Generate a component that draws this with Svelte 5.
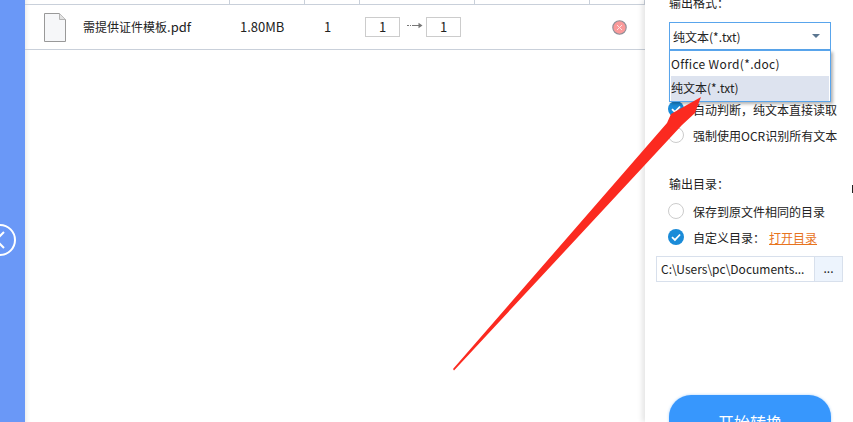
<script lang="ts">
  const columns = [205, 75, 55, 115, 115, 55];
  const outputFormats = ['Office Word(*.doc)', '纯文本(*.txt)'];
</script>

<div class="page">
  <aside class="rail">
    <button class="collapse" aria-label="收起">
      <svg width="28" height="34" viewBox="0 0 28 34">
        <circle cx="3" cy="17" r="15" fill="none" stroke="#fff" stroke-width="2" />
        <path d="M7 9 L-1 17 L7 25" fill="none" stroke="#fff" stroke-width="2" />
      </svg>
    </button>
  </aside>

  <main class="list">
    <div class="head">
      {#each columns as w}
        <span class="head-cell" style="width: {w}px"></span>
      {/each}
    </div>
    <div class="row">
      <svg class="file-icon" width="22" height="29" viewBox="0 0 22 29">
        <path d="M0.5 0.5 H15.5 L21.5 6.5 V28.5 H0.5 Z" fill="#f6f7f9" stroke="#999" />
        <path d="M15.5 0.5 V6.5 H21.5" fill="#e2e2e2" stroke="#b5b5b5" />
      </svg>
      <span class="name">需提供证件模板<span class="ext">.pdf</span></span>
      <span class="size">1.80MB</span>
      <span class="pages">1</span>
      <span class="range">
        <span class="page-box">1</span>
        <svg class="to" width="16" height="7" viewBox="0 0 16 7">
          <path d="M0 3.5 H2 M3 3.5 H4 M5 3.5 H12" stroke="#777" stroke-width="1" />
          <path d="M11.5 0.8 L15.5 3.5 L11.5 6.2 Z" fill="#777" />
        </svg>
        <span class="page-box">1</span>
      </span>
      <svg class="remove" width="15" height="15" viewBox="0 0 15 15">
        <circle cx="7.5" cy="7.5" r="6.7" fill="#fb9a9a" stroke="#8f8f98" stroke-width="1.1" />
        <path d="M5 5 L10 10 M10 5 L5 10" stroke="#fde4e4" stroke-width="1" />
      </svg>
    </div>
  </main>

  <section class="panel">
    <div class="label format-label">输出格式：</div>
    <div class="select">
      <span>纯文本(*.txt)</span>
      <i class="caret"></i>
      <ul class="menu">
        {#each outputFormats as f, i}
          <li class:active={i === 1}>{f}</li>
        {/each}
      </ul>
    </div>
    <div class="option ocr-first">
      <span class="radio checked"><svg width="18" height="18" viewBox="0 0 18 18"><path d="M4.5 9.2 L7.8 12.3 L13.6 6.2" fill="none" stroke="#fff" stroke-width="2" /></svg></span>
      自动判断，纯文本直接读取
    </div>
    <div class="option">
      <span class="radio"></span>
      强制使用OCR识别所有文本
    </div>
    <div class="label dir-label">输出目录：</div>
    <div class="option">
      <span class="radio"></span>
      保存到原文件相同的目录
    </div>
    <div class="option">
      <span class="radio checked"><svg width="18" height="18" viewBox="0 0 18 18"><path d="M4.5 9.2 L7.8 12.3 L13.6 6.2" fill="none" stroke="#fff" stroke-width="2" /></svg></span>
      自定义目录：<a class="open" href="#top">打开目录</a>
    </div>
    <div class="path">
      <span class="path-text">C:\Users\pc\Documents...</span>
      <span class="browse">...</span>
    </div>
    <button class="start">开始转换</button>
  </section>

  <svg class="annotation" width="853" height="422" viewBox="0 0 853 422">
    <path d="M453 369 L454 370.5 L682 125 L695 113 L701 97 L671 114 L667 123 Z" fill="#fb2a20" />
    <rect x="852" y="185" width="1" height="8" fill="#222" />
  </svg>
</div>

<style>
  :global(body) {
    margin: 0;
  }

  .page {
    position: relative;
    display: flex;
    width: 853px;
    height: 422px;
    overflow: hidden;
    background: #fff;
    font-family: "Noto Sans CJK SC", "Liberation Sans", sans-serif;
    font-size: 12px;
    color: #222;
  }

  .rail {
    display: flex;
    align-items: center;
    width: 25px;
    flex-shrink: 0;
    background: #6a98f7;
  }

  .collapse {
    width: 25px;
    height: 34px;
    padding: 0;
    border: 0;
    overflow: hidden;
    background: none;
    margin-top: 57px;
  }

  .collapse svg {
    display: block;
    margin-left: -3px;
  }

  .list {
    width: 620px;
    flex-shrink: 0;
    box-shadow: inset 6px 0 5px -5px #e6e6e6;
  }

  .head {
    display: flex;
    height: 4px;
    border-bottom: 1px solid #c9d0da;
  }

  .head-cell {
    flex-shrink: 0;
    border-right: 1px solid #c9d0da;
    box-sizing: border-box;
  }

  .row {
    display: flex;
    align-items: center;
    height: 44px;
    border-bottom: 1px solid #c9d0da;
    line-height: 18px;
  }

  .file-icon {
    flex-shrink: 0;
    margin-left: 19px;
    margin-top: 1px;
  }

  .name {
    width: 157px;
    margin-left: 17px;
    flex-shrink: 0;
    font-size: 12px;
    white-space: nowrap;
  }

  .ext {
    font-size: 13px;
  }

  .size {
    width: 84px;
    flex-shrink: 0;
    font-size: 13px;
  }

  .pages {
    width: 41px;
    flex-shrink: 0;
    font-size: 13px;
  }

  .range {
    display: flex;
    align-items: center;
    width: 247px;
    flex-shrink: 0;
  }

  .page-box {
    box-sizing: border-box;
    width: 35px;
    height: 20px;
    border: 1px solid #ccc;
    text-align: center;
    line-height: 18px;
    font-size: 13px;
  }

  .to {
    margin: -4px 3px 0 7px;
  }

  .remove {
    flex-shrink: 0;
    margin-top: 1px;
  }

  .panel {
    position: relative;
    flex: 1;
    display: flex;
    flex-direction: column;
    padding-left: 24px;
    box-shadow: -3px 0 5px rgba(0, 0, 0, 0.1);
    font-size: 12px;
  }

  .label {
    height: 18px;
    line-height: 18px;
  }

  .format-label {
    margin-top: -6px;
  }

  .select {
    position: relative;
    display: flex;
    align-items: center;
    justify-content: space-between;
    box-sizing: border-box;
    width: 162px;
    height: 28px;
    margin-top: 10px;
    padding: 0 10px 0 3px;
    border: 1px solid #59a5ec;
  }

  .caret {
    width: 0;
    height: 0;
    border-left: 4px solid transparent;
    border-right: 4px solid transparent;
    border-top: 4px solid #5b7690;
  }

  .menu {
    position: absolute;
    z-index: 1;
    top: 27px;
    left: -1px;
    box-sizing: border-box;
    width: 162px;
    height: 52px;
    margin: 0;
    padding: 1px;
    list-style: none;
    background: #fff;
    border: 1px solid #59a5ec;
    box-shadow: 2px 2px 3px rgba(0, 0, 0, 0.3);
  }

  .menu li {
    height: 24px;
    line-height: 24px;
    font-size: 12px;
    white-space: nowrap;
  }

  .menu li:first-child {
    letter-spacing: 0.35px;
  }

  .menu li.active {
    height: 25px;
    background: #dde3ef;
  }

  .option {
    display: flex;
    align-items: center;
    height: 24px;
    gap: 9px;
    margin-top: 2px;
    margin-left: -1px;
    white-space: nowrap;
  }

  .ocr-first {
    margin-top: 47px;
  }

  .radio {
    box-sizing: border-box;
    width: 16px;
    height: 16px;
    flex-shrink: 0;
    border: 1px solid #ccc;
    border-radius: 50%;
    background: #fff;
  }

  .radio.checked {
    width: 16px;
    border: 0;
    background: #1a8bd8;
  }

  .radio svg {
    display: block;
    width: 16px;
    height: 16px;
  }

  .dir-label {
    margin-top: 28px;
  }

  .dir-label + .option {
    margin-top: 6px;
  }

  .open {
    color: #e8741e;
    margin-left: -5px;
  }

  .path {
    display: flex;
    box-sizing: border-box;
    width: 187px;
    height: 26px;
    margin: 7px 0 0 -13px;
    border: 1px solid #d8e0ec;
  }

  .path-text {
    flex: 1;
    padding-left: 4px;
    line-height: 24px;
    font-size: 12px;
    white-space: nowrap;
    overflow: hidden;
  }

  .browse {
    width: 27px;
    text-align: center;
    line-height: 22px;
    background: #edf4fd;
    border-left: 1px solid #d8e0ec;
  }

  .start {
    position: absolute;
    top: 395px;
    left: 24px;
    width: 162px;
    height: 50px;
    border: 0;
    border-radius: 22px;
    background: #3797fd;
    color: #fff;
    font: 16px "Noto Sans CJK SC", sans-serif;
    padding: 4px 0 0;
    box-shadow: 0 0 3px #a9d1fb;
  }

  .annotation {
    position: absolute;
    inset: 0;
    z-index: 2;
    pointer-events: none;
  }
</style>
